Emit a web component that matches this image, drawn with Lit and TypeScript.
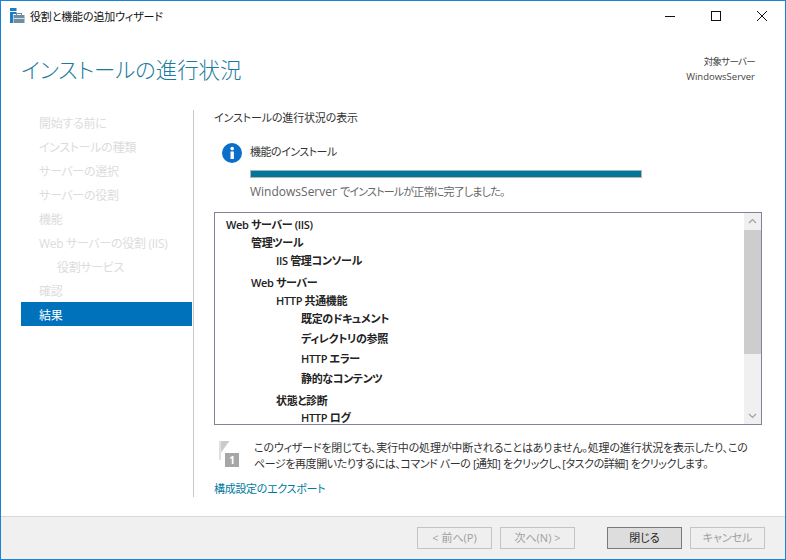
import { LitElement, html, css } from "lit";
import { customElement } from "lit/decorators.js";

const NAV = [
  ["開始する前に", ""],
  ["インストールの種類", ""],
  ["サーバーの選択", ""],
  ["サーバーの役割", ""],
  ["機能", ""],
  ["Web サーバーの役割 (IIS)", ""],
  ["役割サービス", "sub"],
  ["確認", ""],
  ["結果", "active"],
];

const TREE: [string, number, number][] = [
  ["Web サーバー (IIS)", 0, 0],
  ["管理ツール", 1, 1],
  ["IIS 管理コンソール", 2, 1],
  ["Web サーバー", 1, 5],
  ["HTTP 共通機能", 2, 1],
  ["既定のドキュメント", 3, 1],
  ["ディレクトリの参照", 3, 3],
  ["HTTP エラー", 3, 3],
  ["静的なコンテンツ", 3, 3],
  ["状態と診断", 2, 5],
  ["HTTP ログ", 3, 0],
];

@customElement("app-root")
export class AppRoot extends LitElement {
  static styles = css`
    :host {
      display: block;
      width: 786px;
      height: 560px;
      overflow: hidden;
      font-family: "Open Sans", "Noto Sans CJK JP", sans-serif;
      font-size: 11px;
      color: #333;
      font-feature-settings: "palt";
    }
    .window {
      box-sizing: border-box;
      width: 786px;
      height: 560px;
      border: 1px solid #1a83d6;
      display: flex;
      flex-direction: column;
      background: #fff;
    }
    .titlebar {
      height: 29px;
      display: flex;
      align-items: center;
      padding-left: 9px;
      flex: none;
    }
    .titlebar .logo { width: 15px; height: 15px; margin-right: 5px; }
    .titlebar .title { font-size: 11px; letter-spacing: -0.15px; color: #111; }
    .controls { margin-left: auto; display: flex; }
    .controls svg { width: 46px; height: 30px; display: block; }
    .header {
      height: 80px;
      flex: none;
      display: flex;
      justify-content: space-between;
      padding: 0 30px 0 20px;
    }
    .header h1 {
      margin: 20px 0 0;
      font-size: 21.4px;
      line-height: 40px;
      font-weight: 300;
      color: #1a7b9c;
    }
    .target {
      margin-top: 24px;
      text-align: right;
      font-size: 9.5px;
      line-height: 15px;
      color: #444;
    }
    .target .jp { letter-spacing: -0.7px; }
    .body { flex: 1; display: flex; min-height: 0; }
    .sidebar {
      width: 171px;
      margin-left: 20px;
      margin-right: 1px;
      flex: none;
    }
    .nav {
      height: 24px;
      line-height: 28px;
      padding-left: 18px;
      color: #dcdcdc;
      font-size: 12px;
      letter-spacing: -0.3px;
    }
    .nav.sub { padding-left: 36px; }
    .nav.active { background: #0072bc; color: #fff; }
    .main {
      flex: none;
      width: 551px;
      height: 387px;
      border-left: 1px solid #c8c8c8;
      padding-left: 20px;
    }
    .heading { height: 33px; line-height: 15px; letter-spacing: -0.15px; color: #333; }
    .status { display: flex; padding-left: 8px; gap: 8px; }
    .status svg { width: 20px; height: 20px; flex: none; }
    .status-body { flex: 1; padding-right: 123px; }
    .status-title { height: 20px; line-height: 18px; letter-spacing: -0.5px; }
    .bar {
      box-sizing: border-box;
      height: 8px;
      margin-top: 7px;
      background: #00769a;
      border: 1px solid #b4b4b4;
      border-top-color: #9fb4bc;
    }
    .done { margin-top: 5px; line-height: 18px; height: 18px; color: #666; letter-spacing: -0.8px; }
    .done .lat { font-size: 12px; letter-spacing: 0; }
    .box {
      box-sizing: border-box;
      width: 548px;
      height: 213px;
      margin-top: 11px;
      border: 1px solid #84809a;
      display: flex;
      overflow: hidden;
    }
    .tree { flex: 1; padding-top: 3px; overflow: hidden; }
    .row {
      font-weight: 600;
      color: #222;
      height: 17px;
      line-height: 17px;
      letter-spacing: -0.35px;
      white-space: nowrap;
    }
    .l0 { padding-left: 11px; }
    .l1 { padding-left: 36px; }
    .l2 { padding-left: 61px; }
    .l3 { padding-left: 86px; }
    .scroll {
      width: 17px;
      background: #f0f0f0;
      display: flex;
      flex-direction: column;
      flex: none;
    }
    .scroll svg { width: 17px; height: 17px; display: block; flex: none; }
    .thumb { height: 124px; background: #cdcdcd; flex: none; }
    .track { flex: 1; }
    .note { display: flex; margin-top: 13px; height: 42px; padding-left: 3px; }
    .note svg { width: 26px; height: 30px; flex: none; margin-right: 11px; margin-top: 2px; }
    .note p {
      margin: 0;
      line-height: 16px;
      color: #333;
      padding-top: 2px;
      white-space: nowrap;
    }
    .note .one { letter-spacing: -0.18px; }
    .note .two { letter-spacing: -0.42px; }
    .link { display: block; color: #007a9e; line-height: 18px; letter-spacing: -0.3px; }
    .footer {
      flex: none;
      height: 43px;
      background: #f0f0f0;
      border-top: 1px solid #d8d8d8;
      display: flex;
      align-items: flex-start;
      padding-top: 10px;
      padding-left: 416px;
      box-sizing: border-box;
    }
    .btn {
      box-sizing: border-box;
      width: 75px;
      height: 22px;
      border: 1px solid #c4c4c4;
      background: #efefef;
      color: #a0a0a0;
      font-size: 11px;
      text-align: center;
      line-height: 20px;
      margin-right: 8px;
    }
    .btn.gap { margin-right: 32px; }
    .btn.primary { background: #dddddd; border-color: #7a7a7a; color: #222; }
  `;

  render() {
    return html`
      <div class="window">
        <div class="titlebar">
          <svg class="logo" viewBox="0 0 15 15">
            <rect x="0" y="0" width="6.500" height="3" fill="#1a7fc4"/>
            <rect x="0" y="4" width="3" height="11" fill="#1a7fc4"/>
            <rect x="3" y="4" width="3.500" height="2" fill="#1a7fc4"/>
            <rect x="3.500" y="7" width="11" height="8" fill="#6f8ea3"/>
            <rect x="6.500" y="5.500" width="5" height="2" fill="none" stroke="#6f8ea3"/>
            <rect x="3.500" y="10" width="11" height="1" fill="#d5dfe6"/>
          </svg>
          <span class="title">役割と機能の追加ウィザード</span>
          <div class="controls">
            <svg viewBox="0 0 46 30"><path d="M18 15.500h10" stroke="#111" fill="none"/></svg>
            <svg viewBox="0 0 46 30"><rect x="18.500" y="10.500" width="9" height="9" stroke="#111" fill="none"/></svg>
            <svg viewBox="0 0 46 30"><path d="M18 10l10 10M28 10l-10 10" stroke="#111" fill="none"/></svg>
          </div>
        </div>
        <div class="header">
          <h1>インストールの進行状況</h1>
          <div class="target"><span class="jp">対象サーバー</span><br />WindowsServer</div>
        </div>
        <div class="body">
          <div class="sidebar">
            ${NAV.map(([t, c]) => html`<div class="nav ${c}">${t}</div>`)}
          </div>
          <div class="main">
            <div class="heading">インストールの進行状況の表示</div>
            <div class="status">
              <svg viewBox="0 0 20 20">
                <circle cx="10" cy="10" r="10" fill="#0b6fc9"/>
                <rect x="8.500" y="8.500" width="3.400" height="7.500" fill="#fff"/>
                <circle cx="10.200" cy="5.600" r="1.800" fill="#fff"/>
              </svg>
              <div class="status-body">
                <div class="status-title">機能のインストール</div>
                <div class="bar"></div>
                <div class="done"><span class="lat">WindowsServer </span>でインストールが正常に完了しました。</div>
              </div>
            </div>
            <div class="box">
              <div class="tree">
                ${TREE.map(
                  ([t, l, m]) => html`<div class="row l${l}" style="margin-top:${m}px">${t}</div>`
                )}
              </div>
              <div class="scroll">
                <svg viewBox="0 0 17 17"><path d="M5 10l3.500-3.500L12 10" stroke="#a0a0a0" fill="none" stroke-width="1.200"/></svg>
                <div class="thumb"></div>
                <div class="track"></div>
                <svg viewBox="0 0 17 17"><path d="M5 7l3.500 3.500L12 7" stroke="#a0a0a0" fill="none" stroke-width="1.200"/></svg>
              </div>
            </div>
            <div class="note">
              <svg viewBox="0 0 26 30">
                <path d="M2 1h2v19H2z" fill="#e0e0e0"/>
                <path d="M4 1h8.500L4 12.500z" fill="#cbcbcb"/>
                <rect x="8" y="13" width="14" height="14" fill="#a6a6a6"/>
                <text x="15" y="24" font-size="10" fill="#fff" text-anchor="middle" font-weight="700">1</text>
              </svg>
              <p><span class="one">このウィザードを閉じても、実行中の処理が中断されることはありません。処理の進行状況を表示したり、この</span><br /><span class="two">ページを再度開いたりするには、コマンド バーの [通知] をクリックし、[タスクの詳細] をクリックします。</span></p>
            </div>
            <a class="link">構成設定のエクスポート</a>
          </div>
        </div>
        <div class="footer">
          <div class="btn">&lt; 前へ(P)</div>
          <div class="btn gap">次へ(N) &gt;</div>
          <div class="btn primary">閉じる</div>
          <div class="btn">キャンセル</div>
        </div>
      </div>
    `;
  }
}
